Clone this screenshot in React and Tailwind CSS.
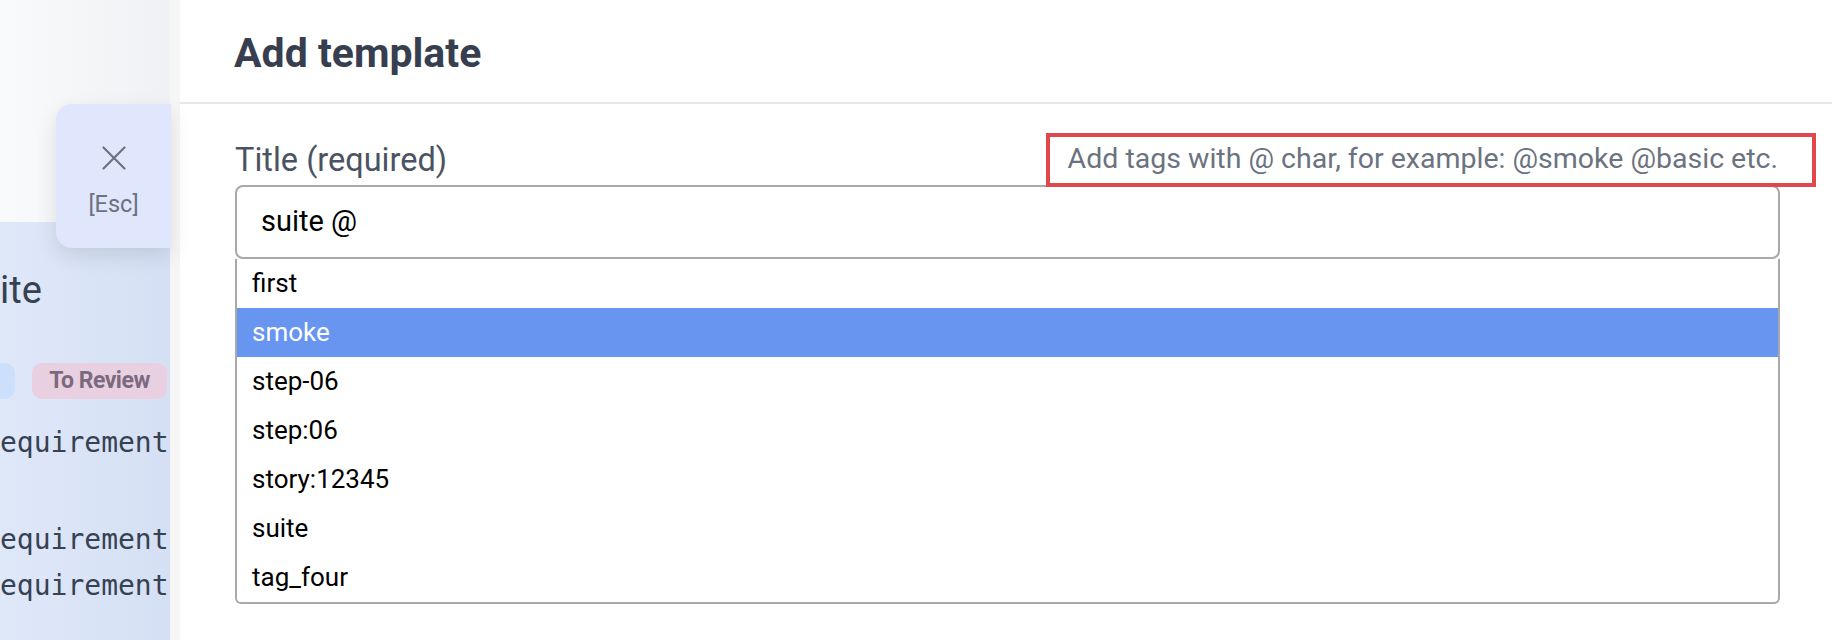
import React from "react";

const items = ["first", "smoke", "step-06", "step:06", "story:12345", "suite", "tag_four"];

export default function App() {
  return (
    <div className="relative flex w-[1832px] h-[640px] overflow-hidden bg-white font-['Roboto',sans-serif]">
      {/* left background page */}
      <aside className="w-[170px] shrink-0 flex flex-col">
        <div className="h-[222px] bg-gradient-to-r from-[#f9fafb] to-[#eff1f4]" />
        <div className="flex-1 overflow-hidden bg-gradient-to-r from-[#dfe8f9] to-[#d5e0f4] text-[#364152]">
          <div className="pt-[46px] text-[38px] leading-[44px] whitespace-nowrap">ite</div>
          <div className="mt-[51px] flex h-[36px] items-center">
            <span className="h-[36px] w-[15px] rounded-r-[10px] bg-[#cce0fb]" />
            <span className="ml-[17px] flex h-[36px] w-[135px] items-center justify-center rounded-[10px] bg-[#e8d0e1] text-[23px] font-bold text-[#7b6a7f] tracking-[-0.5px]">
              To Review
            </span>
          </div>
          <div className="mt-[21px] font-['DejaVu_Sans_Mono',monospace] text-[28px] leading-[46px] whitespace-nowrap">
            <div>equirement</div>
            <div className="mt-[51px]">equirement</div>
            <div>equirement</div>
          </div>
        </div>
      </aside>
      <div className="w-[10px] shrink-0 bg-[#f6f6f7]" />

      {/* modal */}
      <main className="flex-1 flex flex-col bg-white">
        <header className="h-[104px] shrink-0 border-b-2 border-[#e6e7eb] pl-[54px] flex items-center">
          <h1 className="pt-[6px] text-[41px] font-bold text-[#363e4f]">Add template</h1>
        </header>
        <div className="pl-[55px] pr-[52px] pt-[37px]">
          <div className="flex h-[36px] items-center justify-between mb-[8px]">
            <label className="pt-[2px] text-[32.5px] leading-[36px] text-[#4b5363]">Title (required)</label>
            <span className="relative text-[28.5px] leading-[36px] text-[#6b7280] mr-[2px]">
              Add tags with @ char, for example: @smoke @basic etc.
              <span className="pointer-events-none absolute left-[-22px] right-[-38px] top-[-8px] bottom-[-10px] border-[4px] border-[#e2474c]" />
            </span>
          </div>
          <div className="flex h-[74px] items-center rounded-[8px] border-2 border-[#a9a9a9] px-[24px] text-[29px] text-black">
            suite @
          </div>
          <ul className="rounded-b-[6px] border-x-2 border-b-2 border-[#a9a9a9] text-[26px] text-black">
            {items.map((t) => (
              <li
                key={t}
                className={
                  t === "smoke"
                    ? "flex h-[49px] items-center pl-[15px] bg-[#6795f0] text-white"
                    : "flex h-[49px] items-center pl-[15px]"
                }
              >
                {t}
              </li>
            ))}
          </ul>
        </div>
      </main>

      {/* Esc close button */}
      <button className="absolute left-[56px] top-[104px] flex h-[144px] w-[115px] flex-col items-center rounded-l-[16px] bg-[#e0e6fc] pt-[42px] shadow-[0_8px_20px_rgba(30,41,59,0.12)]">
        <svg width="24" height="24" viewBox="0 0 24 24" fill="none" stroke="#6b7280" strokeWidth="2.2" strokeLinecap="round">
          <path d="M1.5 1.5 22.5 22.5M22.5 1.5 1.5 22.5" />
        </svg>
        <span className="mt-[20px] text-[23.5px] leading-[28px] text-[#6b7280]">[Esc]</span>
      </button>
    </div>
  );
}
